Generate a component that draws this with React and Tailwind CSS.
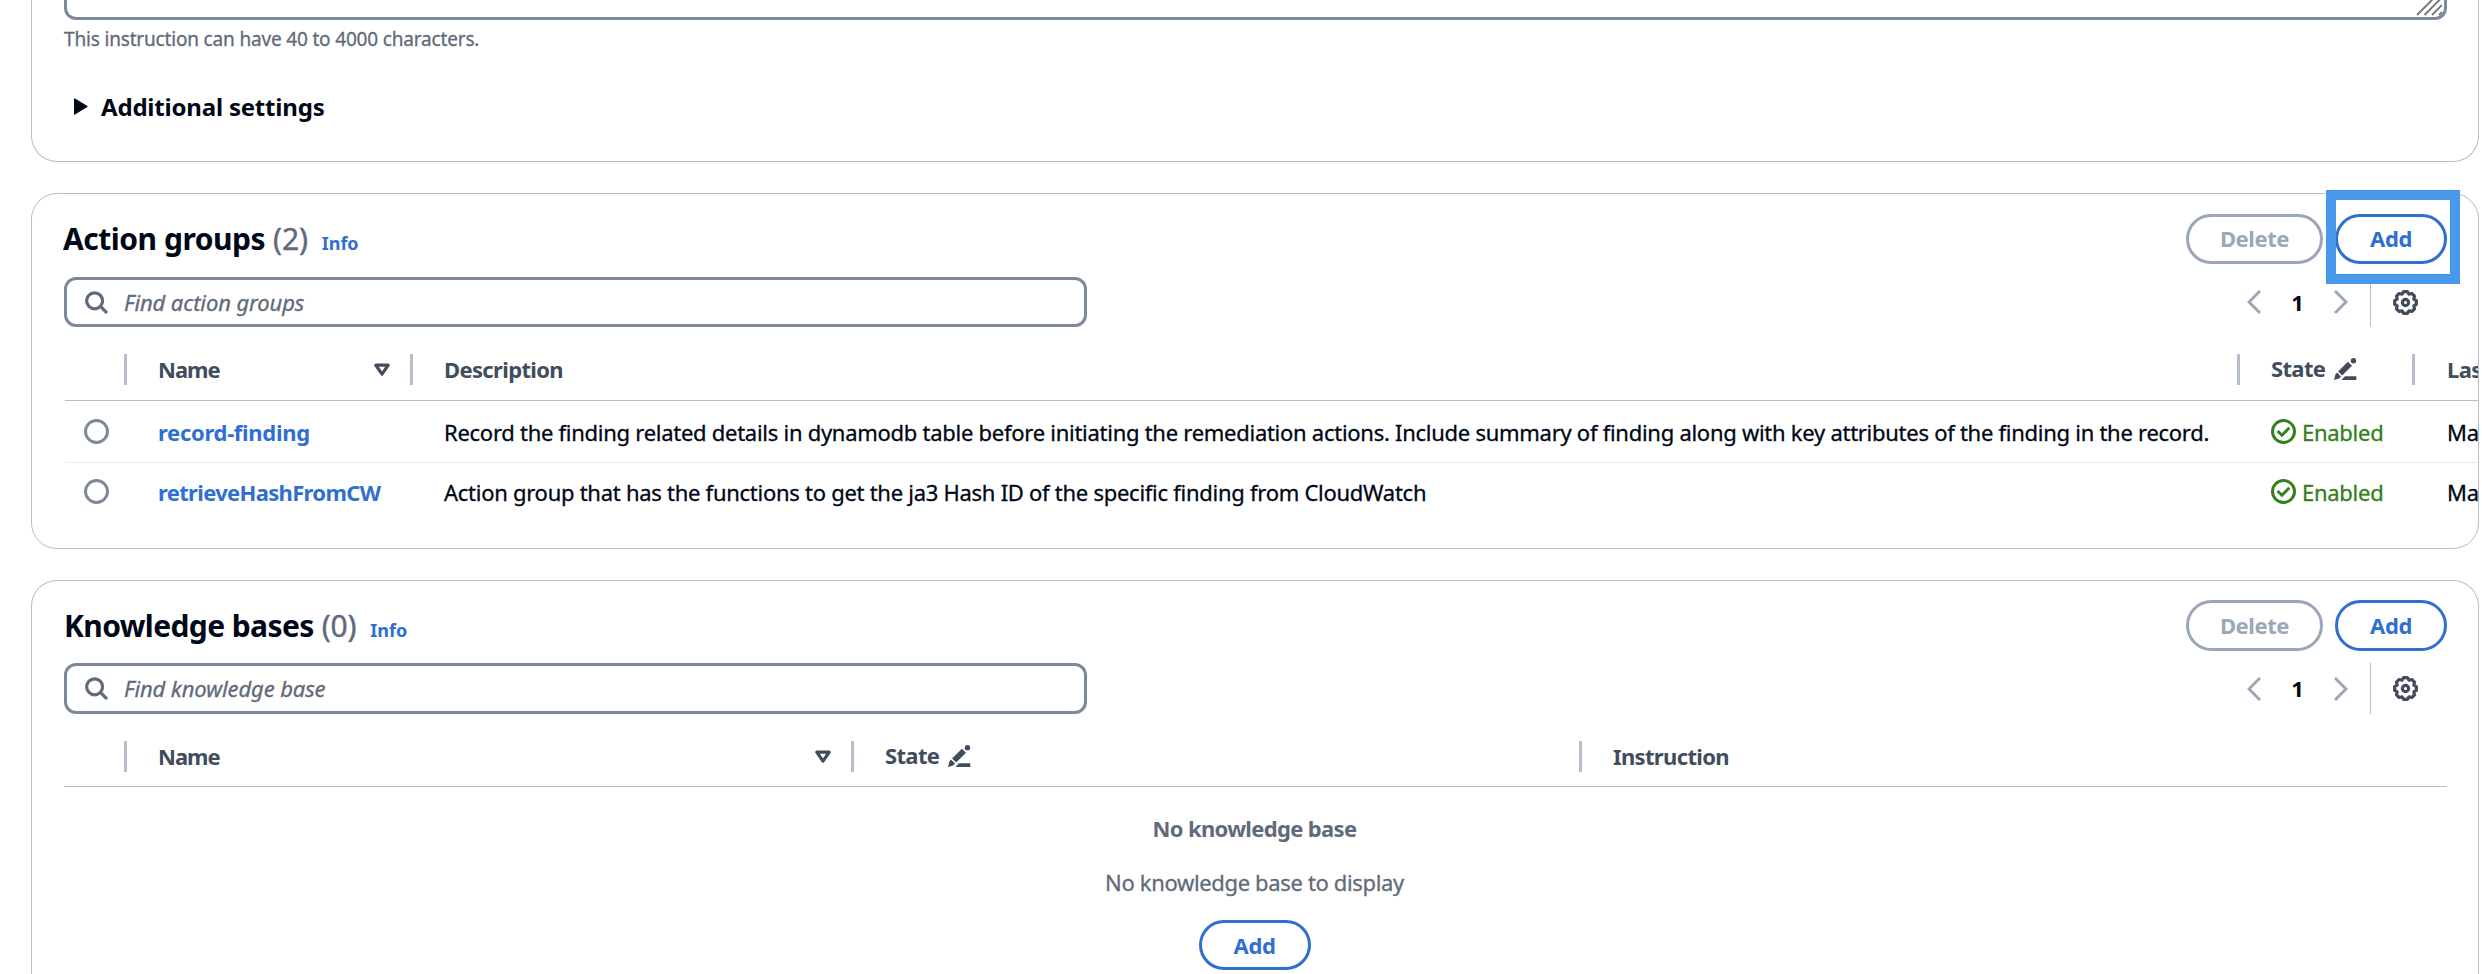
const SearchIcon = () => (
  <svg width="23" height="23" viewBox="0 0 23 23" fill="none" stroke="#5f6b7a" strokeWidth="3.2" className="shrink-0">
    <circle cx="9.6" cy="9.8" r="8" />
    <path d="M15.2 15.2 22 22" />
  </svg>
);

const gearPath = (() => {
  const pts = [];
  const at = (deg, r) => {
    const a = (deg * Math.PI) / 180;
    return `${(12.5 + r * Math.sin(a)).toFixed(2)} ${(12.5 - r * Math.cos(a)).toFixed(2)}`;
  };
  for (let k = 0; k < 8; k++) {
    pts.push(at(k * 45 - 10, 11), at(k * 45 + 10, 11), at(k * 45 + 22.5, 9));
  }
  return `M${pts.join("L")}Z`;
})();

const GearIcon = () => (
  <svg width="25" height="25" viewBox="0 0 25 25" fill="none" stroke="#414d5c" strokeWidth="3.2" strokeLinejoin="round" className="shrink-0">
    <path d={gearPath} />
    <circle cx="12.5" cy="12.5" r="3.1" />
  </svg>
);

const PencilIcon = () => (
  <svg width="23" height="22" viewBox="0 0 23 22" fill="#414d5c" className="shrink-0">
    <circle cx="19.5" cy="2.8" r="2.7" />
    <path d="M13.9 3.7 18 7.8 8.2 17.5 4.1 13.4Z" />
    <path d="M3 14.6 7 18.6 5.2 20.4 0 22 1.4 16.6Z" />
    <path d="M11 18.2H22.3V22H7.4Z" />
  </svg>
);

const SortIcon = () => (
  <svg width="16" height="14" viewBox="0 0 16 14" fill="none" stroke="#414d5c" strokeWidth="3.2" strokeLinejoin="round" className="shrink-0">
    <path d="M1.8 2.2H14.2L8 11.2Z" />
  </svg>
);

const CheckIcon = () => (
  <svg width="25" height="25" viewBox="0 0 25 25" fill="none" stroke="#348020" strokeWidth="3" className="shrink-0">
    <circle cx="12.5" cy="12.5" r="11" />
    <path d="M6.6 12 10.9 16.2 18.3 8.8" />
  </svg>
);

const Chevron = ({ right }) => (
  <svg width="14" height="24" viewBox="0 0 14 24" fill="none" stroke="#9ba7b6" strokeWidth="2.9" className="shrink-0">
    <path d={right ? "M1 1 12 12 1 23" : "M13 1 2 12 13 23"} />
  </svg>
);

const Button = ({ label, kind, tall }) => (
  <button
    className={`flex items-center justify-center rounded-full border-3 pb-px text-[22px] font-bold tracking-[-0.4px] ${tall ? "h-[51px]" : "h-[50px]"} ${
      kind === "delete" ? "w-[137px] border-[#9ba7b6] text-[#9ba7b6]" : "w-[112px] border-[#2f6fd0] text-[#2f6fd0]"
    }`}
  >
    {label}
  </button>
);

const CardHeader = ({ title, count, highlight, tall }) => (
  <div className={`mr-[31px] flex items-start justify-between ${tall ? "h-[51px]" : "h-[50px]"}`}>
    <div className={`flex items-baseline leading-[50px] ${tall ? "pt-px" : "-ml-px"}`}>
      <h2 className={`text-[30px] font-bold text-[#000716] ${tall ? "tracking-[-0.6px]" : "tracking-[-0.48px]"}`}>{title}</h2>
      <span className="ml-[8px] text-[30px] tracking-[-0.2px] text-[#5f6b7a] [-webkit-text-stroke:0.4px]">({count})</span>
      <a className="ml-[14px] text-[18px] leading-6 font-bold text-[#2f6fd0]">Info</a>
    </div>
    <div className="flex gap-3">
      <Button label="Delete" kind="delete" tall={tall} />
      <div className="relative">
        <Button label="Add" tall={tall} />
        {highlight && <div className="absolute -top-6 left-[-9px] z-10 h-[94px] w-[134px] border-10 border-[#4a98ec]" />}
      </div>
    </div>
  </div>
);

const Toolbar = ({ placeholder, tall }) => (
  <div className={`mr-[31px] flex justify-between ${tall ? "mt-3 h-[51px]" : "mt-[13px] h-[50px]"}`}>
    <div className="flex w-[1023px] items-center rounded-xl border-3 border-[#7d8998] pl-[18px]">
      <SearchIcon />
      <span className="ml-[16px] text-[22px] tracking-[-0.1px] text-[#5f6b7a] italic [-webkit-text-stroke:0.3px]">{placeholder}</span>
    </div>
    <div className="flex items-center pr-[29px]">
      <Chevron />
      <span className="w-[73px] text-center text-[22px] font-bold text-[#000716]">1</span>
      <Chevron right />
      <div className="mr-[22px] ml-[22px] h-full w-px bg-[#b6bec9]" />
      <GearIcon />
    </div>
  </div>
);

const Head = ({ children, last, className = "" }) => (
  <div className={`flex items-center ${className}`}>
    <div className="flex flex-1 items-center justify-between">{children}</div>
    {!last && <div className="h-[31px] w-[3px] shrink-0 bg-[#b6bec9]" />}
  </div>
);

const NameHead = () => (
  <Head className="pl-[31px]">
    <span className="tracking-[-1px]">Name</span>
    <div className="pr-5">
      <SortIcon />
    </div>
  </Head>
);

const StateHead = () => (
  <div className="flex items-center gap-[9px] pb-0.5">
    State
    <PencilIcon />
  </div>
);

const groupCols = "grid grid-cols-[63px_286px_1827px_175px_200px]";
const kbCols = "grid grid-cols-[63px_727px_728px_1fr]";
const headText = "text-[22px] font-bold tracking-[-0.65px] text-[#414d5c]";

const groups = [
  {
    name: "record-finding",
    nameTracking: "tracking-[-0.3px]",
    description:
      "Record the finding related details in dynamodb table before initiating the remediation actions. Include summary of finding along with key attributes of the finding in the record.",
  },
  {
    name: "retrieveHashFromCW",
    nameTracking: "tracking-[-0.67px]",
    description: "Action group that has the functions to get the ja3 Hash ID of the specific finding from CloudWatch",
  },
];

export default function App() {
  return (
    <div className="h-[974px] w-[2482px] overflow-hidden bg-white pl-[31px] font-['Noto_Sans',sans-serif] whitespace-nowrap text-[#000716]">
      <section className="h-[162px] w-[2448px] rounded-b-[26px] border border-t-0 border-[#b6bec9] pl-8">
        <div className="mr-[31px] flex h-5 justify-end rounded-b-xl border-3 border-t-0 border-[#7d8998]">
          <svg width="27" height="16" viewBox="0 0 27 16" fill="none" stroke="#777" strokeWidth="1.9" className="mr-0.5">
            <path d="M2 15 18 -1M9.5 15 25.5 -1M17 15 27 5M24 15 27 12" />
          </svg>
        </div>
        <p className="mt-[5px] text-[19px] leading-7 tracking-[-0.17px] text-[#5f6b7a] [-webkit-text-stroke:0.3px]">
          This instruction can have 40 to 4000 characters.
        </p>
        <div className="mt-[37px] flex h-8 items-center pl-[10px]">
          <svg width="14" height="17" viewBox="0 0 14 17" fill="#000716" stroke="#000716" strokeWidth="1" strokeLinejoin="round">
            <path d="M.5 .7V16.3L13.3 8.5Z" />
          </svg>
          <h3 className="ml-[13px] pt-px text-[24px] leading-8 font-bold tracking-[-0.2px]">Additional settings</h3>
        </div>
      </section>

      <section className="mt-[31px] h-[356px] w-[2448px] rounded-[26px] border border-[#b6bec9] pt-5 pl-8">
        <CardHeader title="Action groups" count={2} highlight />
        <Toolbar placeholder="Find action groups" />
        <div className="ml-px overflow-hidden">
          <div className={`-ml-px h-[74px] border-b border-[#b6bec9] pt-3 ${groupCols} ${headText}`}>
            <Head />
            <NameHead />
            <Head className="pl-[31px]">Description</Head>
            <Head className="pl-[31px]">
              <StateHead />
            </Head>
            <Head className="pl-[32px]" last>
              Last
            </Head>
          </div>
          {groups.map((g, i) => (
            <div
              key={g.name}
              className={`-ml-px items-center text-[22px] tracking-[-0.27px] ${groupCols} ${i === 0 ? "h-[62px] border-b border-[#e9ebed]" : "h-[57px]"}`}
            >
              <div className="ml-5 size-[25px] rounded-full border-3 border-[#7d8998]" />
              <a className={`pt-0.5 pl-[31px] font-bold text-[#2f6fd0] ${g.nameTracking}`}>{g.name}</a>
              <span className="pt-0.5 pl-[31px] [-webkit-text-stroke:0.3px]">{g.description}</span>
              <div className="flex items-center gap-[6px] pl-[31px] text-[#348020]">
                <CheckIcon />
                <span className="pt-0.5 [-webkit-text-stroke:0.3px]">Enabled</span>
              </div>
              <span className="pt-0.5 pl-[32px] [-webkit-text-stroke:0.3px]">May</span>
            </div>
          ))}
        </div>
      </section>

      <section className="mt-[31px] h-[420px] w-[2448px] rounded-t-[26px] border border-b-0 border-[#b6bec9] pt-[19px] pl-8">
        <CardHeader title="Knowledge bases" count={0} tall />
        <Toolbar placeholder="Find knowledge base" tall />
        <div className={`mr-[31px] h-[73px] border-b border-[#b6bec9] pt-[13px] ${kbCols} ${headText}`}>
          <Head />
          <NameHead />
          <Head className="pl-[31px]">
            <StateHead />
          </Head>
          <Head className="pl-[31px]" last>
            Instruction
          </Head>
        </div>
        <div className="mr-[33px] flex flex-col items-center pt-[25px] text-[22px] leading-8 text-[#5f6b7a]">
          <p className="font-bold tracking-[-0.65px]">No knowledge base</p>
          <p className="mt-[22px] mb-[22px] tracking-[-0.35px] [-webkit-text-stroke:0.3px]">No knowledge base to display</p>
          <Button label="Add" />
        </div>
      </section>
    </div>
  );
}
